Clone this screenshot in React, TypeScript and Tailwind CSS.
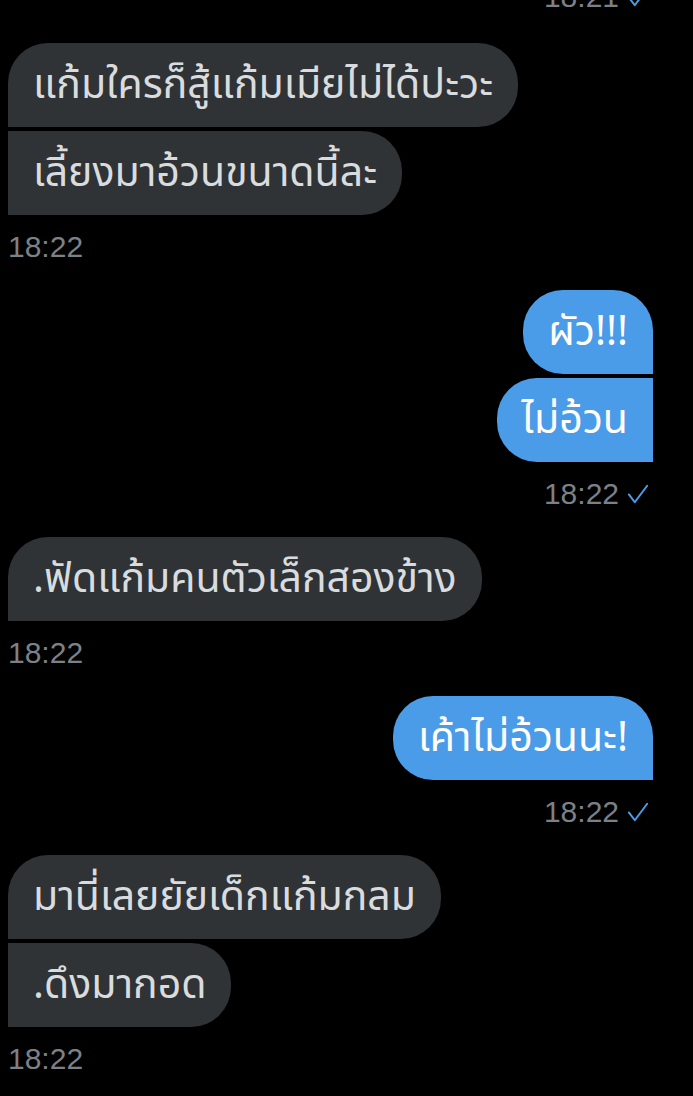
const thai = "font-['Noto_Sans_Thai','Noto_Sans','DejaVu_Sans',sans-serif]"

function Check() {
  return (
    <svg viewBox="0 0 24 24" className="h-[22px] w-[22px]" fill="none" stroke="#4a9be8" strokeWidth="2.2" strokeLinecap="round" strokeLinejoin="round">
      <path d="M2 12.5l6.5 8.5L22 3" />
    </svg>
  )
}

function Time({ text, mine }: { text: string; mine?: boolean }) {
  return (
    <div className={`flex items-center gap-[8px] font-['Liberation_Sans',sans-serif] text-[30px] leading-[36px] text-[#7d8186] ${mine ? 'justify-end pr-[4px]' : ''}`}>
      <span>{text}</span>
      {mine && <Check />}
    </div>
  )
}

function Bubble({ text, mine, first }: { text: string; mine?: boolean; first?: boolean }) {
  const shape = mine
    ? `rounded-l-[40px] ${first ? 'rounded-tr-[40px]' : ''}`
    : `rounded-r-[40px] ${first ? 'rounded-tl-[40px]' : ''}`
  return (
    <div
      className={`${thai} ${shape} px-[25px] py-[20px] text-[41px] leading-[44px] ${
        mine ? 'self-end bg-[#4a9be8] text-white' : 'self-start bg-[#2f3336] text-[#d9dcde]'
      }`}
    >
      {text}
    </div>
  )
}

function Group({ msgs, mine, time }: { msgs: string[]; mine?: boolean; time: string }) {
  return (
    <div className="flex flex-col">
      <div className="flex flex-col gap-[4px]">
        {msgs.map((m, i) => (
          <Bubble key={i} text={m} mine={mine} first={i === 0} />
        ))}
      </div>
      <div className="mt-[14px]">
        <Time text={time} mine={mine} />
      </div>
    </div>
  )
}

export default function App() {
  return (
    <div className="h-[1096px] w-[693px] overflow-hidden bg-black pl-[8px] pr-[40px]">
      <div className="-mt-[21px]">
        <Time text="18:21" mine />
      </div>
      <div className="mt-[28px] flex flex-col gap-[25px]">
        <Group msgs={['แก้มใครก็สู้แก้มเมียไม่ได้ปะวะ', 'เลี้ยงมาอ้วนขนาดนี้ละ']} time="18:22" />
        <Group mine msgs={['ผัว!!!', 'ไม่อ้วน']} time="18:22" />
        <Group msgs={['.ฟัดแก้มคนตัวเล็กสองข้าง']} time="18:22" />
        <Group mine msgs={['เค้าไม่อ้วนนะ!']} time="18:22" />
        <Group msgs={['มานี่เลยยัยเด็กแก้มกลม', '.ดึงมากอด']} time="18:22" />
      </div>
    </div>
  )
}
